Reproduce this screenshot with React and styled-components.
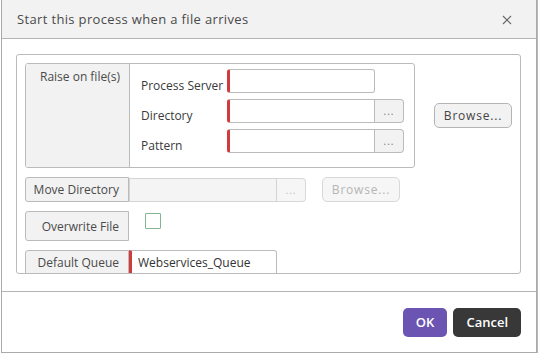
import React from "react";
import styled, { createGlobalStyle } from "styled-components";

const Global = createGlobalStyle`
  html, body {
    margin: 0;
    padding: 0;
    background: #ffffff;
  }
  body {
    font-family: "Open Sans", "Noto Sans", sans-serif;
    color: #333;
  }
`;

export default function App() {
  return (
    <React.Fragment>
      <Global />
      <Page>
        <Dialog>
          <Header>
            <Title>Start this process when a file arrives</Title>
            <Close>
              <svg width="10" height="10" viewBox="0 0 10 10">
                <path d="M1 1L9 9M9 1L1 9" stroke="#666" strokeWidth="1.1" />
              </svg>
            </Close>
          </Header>
          <Body>
            <Fieldset>
              <Row>
                <Group>
                  <GroupLabel>Raise on file(s)</GroupLabel>
                  <GroupFields>
                    <FieldRow>
                      <FieldLabel>Process Server</FieldLabel>
                      <Input required />
                    </FieldRow>
                    <FieldRow>
                      <FieldLabel>Directory</FieldLabel>
                      <Input required joined />
                      <Dots>...</Dots>
                    </FieldRow>
                    <FieldRow>
                      <FieldLabel>Pattern</FieldLabel>
                      <Input required joined />
                      <Dots>...</Dots>
                    </FieldRow>
                  </GroupFields>
                </Group>
                <Button>Browse...</Button>
              </Row>

              <Row>
                <BoxLabel>Move Directory</BoxLabel>
                <Input disabled joined flat />
                <Dots disabled>...</Dots>
                <Button disabled $left={16}>Browse...</Button>
              </Row>

              <Row>
                <BoxLabel tall>Overwrite File</BoxLabel>
                <Check />
              </Row>

              <Row $top>
                <BoxLabel open>Default Queue</BoxLabel>
                <Input required flat open value="Webservices_Queue" />
              </Row>
            </Fieldset>
          </Body>
          <Footer>
            <Action primary>OK</Action>
            <Action>Cancel</Action>
          </Footer>
        </Dialog>
      </Page>
    </React.Fragment>
  );
}

const Page = styled.div`
  width: 538px;
  height: 354px;
  padding-left: 1px;
  box-sizing: border-box;
  background: #fff;
`;

const Dialog = styled.div`
  width: 536px;
  height: 353px;
  box-sizing: border-box;
  border: 1px solid #aaaaaa;
  border-top: none;
  box-shadow: 2px 0 0 #b8b8b8;
  display: flex;
  flex-direction: column;
  background: #fff;
`;

const Header = styled.div`
  height: 39px;
  box-sizing: border-box;
  background: #f2f2f2;
  border-bottom: 1px solid #b4b4b4;
  display: flex;
  align-items: center;
  justify-content: space-between;
  padding: 0 24px 0 15px;
`;

const Title = styled.div`
  font-size: 13px;
  letter-spacing: 0.35px;
  color: #4a4a4a;
`;

const Close = styled.div`
  display: flex;
  margin-top: 1px;
`;

const Body = styled.div`
  flex: 1;
  padding: 15px 15px 17px 14px;
`;

const Fieldset = styled.div`
  height: 220px;
  box-sizing: border-box;
  border: 1px solid #bbbbbb;
  border-radius: 3px;
  padding: 8px 8px 0 8px;
  overflow: hidden;
  display: flex;
  flex-direction: column;
  gap: 9px;
`;

const Row = styled.div`
  display: flex;
  align-items: ${(p) => (p.$top ? "flex-start" : "center")};
`;

const Group = styled.div`
  width: 390px;
  height: 105px;
  box-sizing: border-box;
  border: 1px solid #bbbbbb;
  border-radius: 3px;
  display: flex;
  overflow: hidden;
  margin-right: 19px;
`;

const GroupLabel = styled.div`
  width: 104px;
  box-sizing: border-box;
  background: #f2f2f2;
  border-right: 1px solid #bbbbbb;
  text-align: right;
  padding: 4px 9px 0 0;
  font-size: 12px;
  color: #4a4a4a;
`;

const GroupFields = styled.div`
  flex: 1;
  padding: 5px 10px 0 11px;
  display: flex;
  flex-direction: column;
  gap: 6px;
`;

const FieldRow = styled.div`
  display: flex;
  align-items: center;
  height: 24px;
`;

const FieldLabel = styled.div`
  width: 86px;
  font-size: 12px;
  color: #3a3a3a;
  padding-top: 8px;
`;

const Input = styled.input.attrs({ type: "text", readOnly: true })`
  width: 148px;
  height: ${(p) => (p.open ? "30px" : "24px")};
  box-sizing: border-box;
  border: 1px solid #bbbbbb;
  border-left: ${(p) => (p.required ? "3px solid #d23b3b" : "1px solid #bbbbbb")};
  border-radius: ${(p) => (p.flat ? "0" : p.joined ? "3px 0 0 3px" : "3px")};
  border-top-right-radius: ${(p) => (p.open ? "3px" : "")};
  background: ${(p) => (p.disabled ? "#f4f4f4" : "#fff")};
  border-color: ${(p) => (p.disabled ? "#d4d4d4" : "")};
  padding: ${(p) => (p.open ? "0 6px 6px 6px" : "0 6px")};
  font-family: "Open Sans", "Noto Sans", sans-serif;
  font-size: 12px;
  color: #333;
  outline: none;
  margin: 0;
`;

const Dots = styled.div`
  width: 29px;
  height: 24px;
  box-sizing: border-box;
  border: 1px solid ${(p) => (p.disabled ? "#d8d8d8" : "#bbbbbb")};
  border-left: none;
  border-radius: 0 4px 4px 0;
  background: ${(p) => (p.disabled ? "#f6f6f6" : "#f2f2f2")};
  color: ${(p) => (p.disabled ? "#bbb" : "#777")};
  font-size: 10px;
  display: flex;
  align-items: center;
  justify-content: center;
  letter-spacing: 1px;
`;

const Button = styled.div`
  width: 78px;
  height: 25px;
  box-sizing: border-box;
  margin-left: ${(p) => (p.$left ? p.$left + "px" : "0")};
  border: 1px solid ${(p) => (p.disabled ? "#d8d8d8" : "#b4b4b4")};
  border-radius: 5px;
  background: ${(p) => (p.disabled ? "#f6f6f6" : "#f2f2f2")};
  color: ${(p) => (p.disabled ? "#b5b5b5" : "#444")};
  font-size: 12px;
  letter-spacing: 0.8px;
  display: flex;
  align-items: center;
  justify-content: center;
`;

const BoxLabel = styled.div`
  width: 104px;
  height: ${(p) => (p.tall ? "30px" : p.open ? "30px" : "25px")};
  box-sizing: border-box;
  background: #f2f2f2;
  border: 1px solid #bbbbbb;
  border-radius: 3px 0 0 3px;
  display: flex;
  align-items: ${(p) => (p.open ? "flex-start" : "center")};
  justify-content: flex-end;
  padding: ${(p) => (p.open ? "3px 9px 0 0" : "0 9px 0 0")};
  font-size: 12px;
  color: #4a4a4a;
`;

const Check = styled.div`
  width: 16px;
  height: 16px;
  box-sizing: border-box;
  border: 1px solid #86b492;
  border-radius: 1px;
  margin: -10px 0 0 16px;
  background: #fff;
`;

const Footer = styled.div`
  height: 61px;
  box-sizing: border-box;
  border-top: 1px solid #b4b4b4;
  display: flex;
  align-items: center;
  justify-content: flex-end;
  gap: 6px;
  padding: 0 15px 0 0;
`;

const Action = styled.div`
  height: 29px;
  padding: 0 13px;
  border-radius: 5px;
  background: ${(p) => (p.primary ? "#6b54b2" : "#383838")};
  color: #fff;
  font-size: 13px;
  font-weight: 600;
  display: flex;
  align-items: center;
  justify-content: center;
`;
